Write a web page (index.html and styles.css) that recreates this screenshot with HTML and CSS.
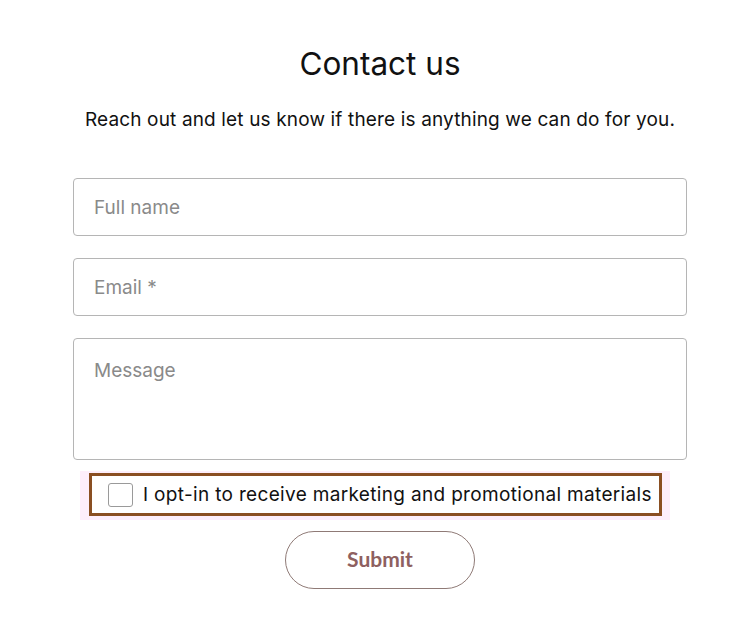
FILE: index.html
```html
<!DOCTYPE html>
<html lang="en">
<head>
<meta charset="utf-8">
<title>Contact us</title>
<link rel="stylesheet" href="styles.css">
</head>
<body>
<main class="contact">
  <h1 class="title">Contact us</h1>
  <p class="lead">Reach out and let us know if there is anything we can do for you.</p>
  <form class="form">
    <div class="field"><input class="input" type="text" placeholder="Full name"></div>
    <div class="field"><input class="input" type="email" placeholder="Email *"></div>
    <div class="field"><textarea class="input textarea" placeholder="Message"></textarea></div>
    <div class="optin-wrap">
      <label class="optin">
        <span class="box"></span>
        <span class="optin-text">I opt-in to receive marketing and promotional materials</span>
      </label>
    </div>
    <div class="actions">
      <button type="button" class="submit">Submit</button>
    </div>
  </form>
</main>
</body>
</html>
```

FILE: styles.css
```css
* { box-sizing: border-box; }
html, body { margin: 0; padding: 0; background: #ffffff; }
body {
  font-family: "Inter", "Liberation Sans", sans-serif;
  color: #111111;
  overflow: hidden;
}
.contact {
  width: 614px;
  margin-left: 73px;
  padding-top: 44px;
}
.title {
  margin: 0;
  text-align: center;
  font-size: 31.5px;
  font-weight: 400;
  line-height: 40px;
  letter-spacing: 0;
}
.lead {
  margin: 24px 0 0;
  text-align: center;
  font-size: 19px;
  line-height: 24px;
  letter-spacing: 0.15px;
}
.form {
  margin-top: 46px;
  display: flex;
  flex-direction: column;
}
.field { margin-bottom: 22px; }
.field:nth-child(3) { margin-bottom: 11px; }
.input {
  display: block;
  width: 100%;
  height: 58px;
  border: 1px solid #b5b5b5;
  border-radius: 4px;
  padding: 0 20px;
  font-family: inherit;
  font-size: 19px;
  color: #333;
  background: #fff;
  outline: none;
}
.input::placeholder { color: #8a8a8a; }
.textarea {
  height: 122px;
  padding-top: 20px;
  resize: none;
  line-height: 24px;
}
.optin-wrap {
  margin: 0 17px 0 7px;
  background: #fdeefb;
  padding: 2px 8px 4px 9px;
}
.optin {
  display: flex;
  align-items: center;
  height: 43px;
  border: 3px solid #8a4f22;
  padding-left: 16px;
  gap: 10px;
  background: #fff;
}
.box {
  width: 25px;
  height: 24px;
  border: 1px solid #9a9a9a;
  border-radius: 3px;
  background: #fff;
  flex: none;
}
.optin-text {
  font-size: 19px;
  line-height: 24px;
  letter-spacing: 0.33px;
  color: #111;
}
.actions {
  display: flex;
  justify-content: center;
  margin-top: 11px;
}
.submit {
  width: 190px;
  height: 58px;
  border: 1.5px solid #8f7a76;
  border-radius: 29px;
  background: #fff;
  padding: 0 0 4px;
  font-family: "Lato", "Liberation Sans", sans-serif;
  font-weight: 700;
  font-size: 21px;
  color: #8e6060;
  cursor: pointer;
}
```
